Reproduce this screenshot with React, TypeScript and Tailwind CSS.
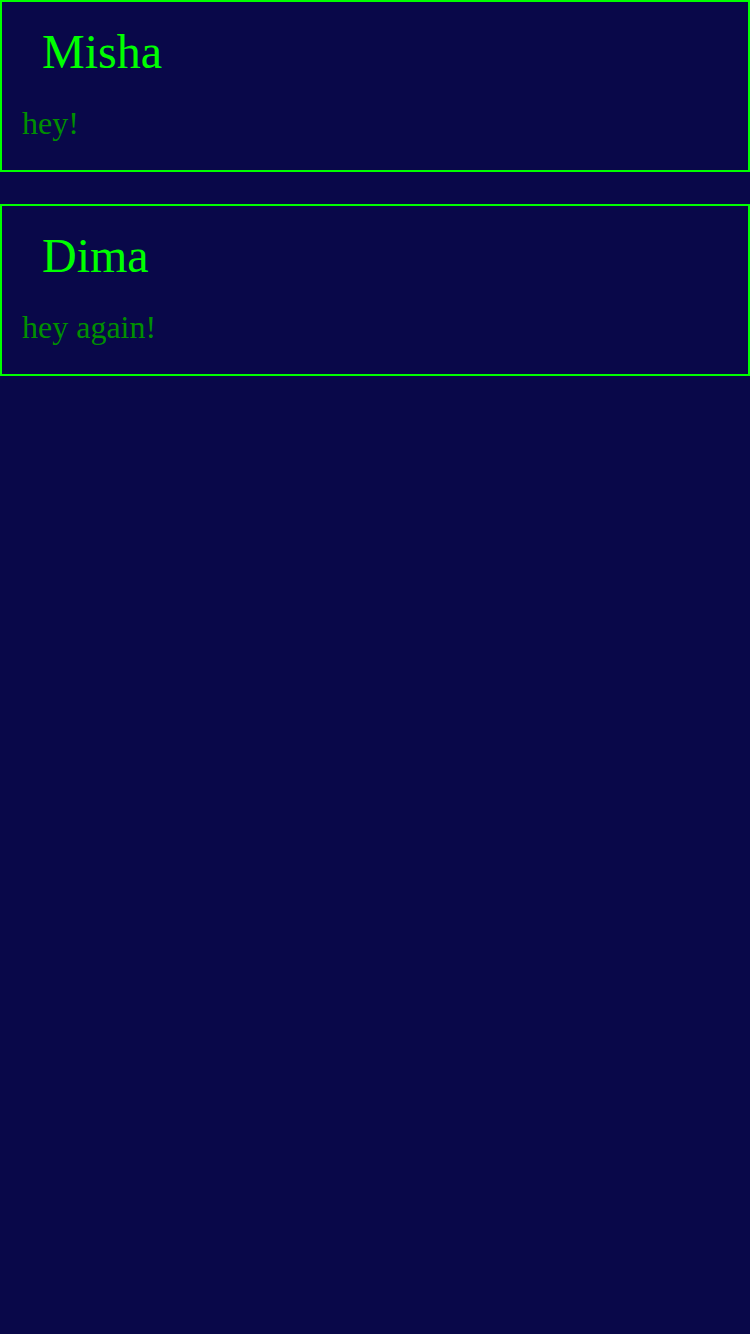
const messages = [
  { name: "Misha", text: "hey!" },
  { name: "Dima", text: "hey again!" },
];

export default function App() {
  return (
    <div className="min-h-[1334px] w-full bg-[#090849] font-['Liberation_Serif',serif]">
      <div className="flex flex-col gap-8">
        {messages.map((msg) => (
          <div
            key={msg.name}
            className="border-2 border-[#00ff00] px-5 pt-[23px] pb-[29px]"
          >
            <div className="ml-5 text-[48px] leading-[53px] text-[#00ff00]">
              {msg.name}
            </div>
            <div className="mt-[28px] text-[32px] leading-[35px] text-[#009000]">
              {msg.text}
            </div>
          </div>
        ))}
      </div>
    </div>
  );
}
